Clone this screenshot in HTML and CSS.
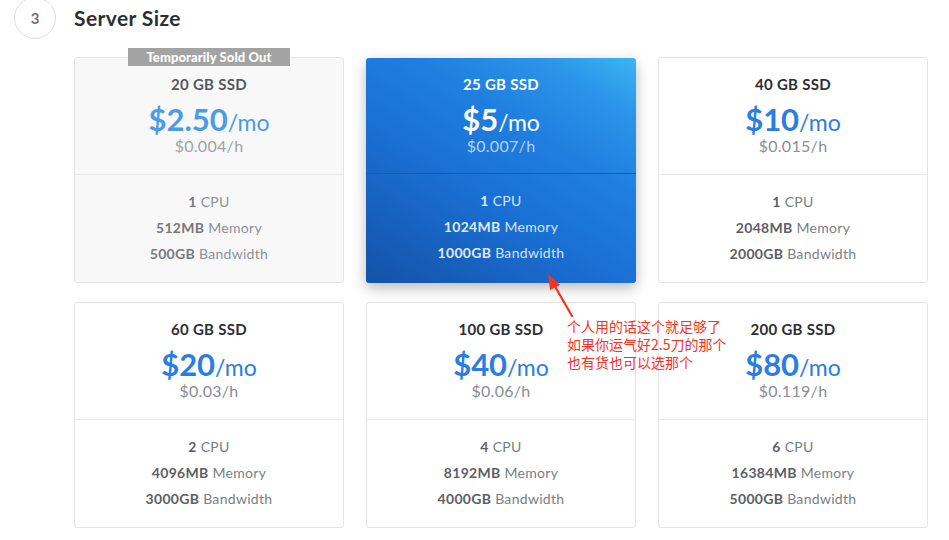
FILE: index.html
```html
<!DOCTYPE html>
<html lang="zh">
<head>
<meta charset="utf-8">
<title>Server Size</title>
<link rel="stylesheet" href="styles.css">
</head>
<body>
<div class="page">
  <header class="section-head">
    <span class="step">3</span>
    <h2 class="title">Server Size</h2>
  </header>

  <div class="grid">
    <div class="card soldout">
      <span class="badge">Temporarily Sold Out</span>
      <div class="top">
        <div class="size">20 GB SSD</div>
        <div class="price"><span class="amt">$2.50</span><span class="per">/mo</span></div>
        <div class="hour">$0.004/h</div>
      </div>
      <div class="specs">
        <div><b>1</b> CPU</div>
        <div><b>512MB</b> Memory</div>
        <div><b>500GB</b> Bandwidth</div>
      </div>
    </div>

    <div class="card selected">
      <div class="top">
        <div class="size">25 GB SSD</div>
        <div class="price"><span class="amt">$5</span><span class="per">/mo</span></div>
        <div class="hour">$0.007/h</div>
      </div>
      <div class="specs">
        <div><b>1</b> CPU</div>
        <div><b>1024MB</b> Memory</div>
        <div><b>1000GB</b> Bandwidth</div>
      </div>
    </div>

    <div class="card">
      <div class="top">
        <div class="size">40 GB SSD</div>
        <div class="price"><span class="amt">$10</span><span class="per">/mo</span></div>
        <div class="hour">$0.015/h</div>
      </div>
      <div class="specs">
        <div><b>1</b> CPU</div>
        <div><b>2048MB</b> Memory</div>
        <div><b>2000GB</b> Bandwidth</div>
      </div>
    </div>

    <div class="card">
      <div class="top">
        <div class="size">60 GB SSD</div>
        <div class="price"><span class="amt">$20</span><span class="per">/mo</span></div>
        <div class="hour">$0.03/h</div>
      </div>
      <div class="specs">
        <div><b>2</b> CPU</div>
        <div><b>4096MB</b> Memory</div>
        <div><b>3000GB</b> Bandwidth</div>
      </div>
    </div>

    <div class="card">
      <div class="top">
        <div class="size">100 GB SSD</div>
        <div class="price"><span class="amt">$40</span><span class="per">/mo</span></div>
        <div class="hour">$0.06/h</div>
      </div>
      <div class="specs">
        <div><b>4</b> CPU</div>
        <div><b>8192MB</b> Memory</div>
        <div><b>4000GB</b> Bandwidth</div>
      </div>
    </div>

    <div class="card">
      <div class="top">
        <div class="size">200 GB SSD</div>
        <div class="price"><span class="amt">$80</span><span class="per">/mo</span></div>
        <div class="hour">$0.119/h</div>
      </div>
      <div class="specs">
        <div><b>6</b> CPU</div>
        <div><b>16384MB</b> Memory</div>
        <div><b>5000GB</b> Bandwidth</div>
      </div>
    </div>
  </div>

  <svg class="arrow" width="40" height="50" viewBox="0 0 40 50">
    <line x1="33" y1="45" x2="14" y2="12" stroke="#f5331f" stroke-width="2.2" stroke-linecap="round"/>
    <polygon points="9,3 21,14 11,19" fill="#f5331f"/>
  </svg>
  <div class="note">个人用的话这个就足够了<br>如果你运气好2.5刀的那个<br>也有货也可以选那个</div>
</div>
</body>
</html>
```

FILE: styles.css
```css
html, body {
  margin: 0;
  padding: 0;
  background: #fff;
}

.page {
  position: relative;
  width: 949px;
  height: 540px;
  overflow: hidden;
  font-family: Lato, "Open Sans", "Liberation Sans", sans-serif;
  color: #333;
}

.section-head {
  display: flex;
  align-items: center;
  gap: 18px;
  padding-left: 14px;
  margin-top: -3px;
  height: 42px;
}

.step {
  box-sizing: border-box;
  width: 42px;
  height: 42px;
  border: 1px solid #dcdfe3;
  border-radius: 50%;
  display: flex;
  align-items: center;
  justify-content: center;
  font-size: 15px;
  font-weight: 700;
  color: #6e7580;
}

.title {
  margin: -1px 0 0;
  font-size: 21px;
  font-weight: 700;
  color: #2b2f33;
  letter-spacing: 0.4px;
}

.grid {
  display: grid;
  grid-template-columns: repeat(3, 270px);
  column-gap: 22px;
  row-gap: 19px;
  margin: 18px 0 0 74px;
}

.card {
  position: relative;
  box-sizing: border-box;
  height: 226px;
  border: 1px solid #e3e5e8;
  border-radius: 3px;
  background: #fff;
  text-align: center;
}

.top {
  box-sizing: border-box;
  height: 117px;
  padding-top: 16px;
  border-bottom: 1px solid #e6e8eb;
}

.size,
.price,
.hour {
  width: fit-content;
  margin-left: auto;
  margin-right: auto;
}

.size {
  font-size: 15px;
  font-weight: 700;
  line-height: 20px;
  color: #2b2f33;
  letter-spacing: 0.3px;
}

.price {
  margin-top: 13px;
  line-height: 24px;
  color: #2a7de1;
}

.amt {
  font-size: 31px;
  font-weight: 700;
}

.per {
  font-size: 23px;
  font-weight: 400;
}

.hour {
  font-size: 16px;
  line-height: 18px;
  color: #8a8e93;
  letter-spacing: 0.3px;
}

.specs {
  padding-top: 14px;
  font-size: 14px;
  line-height: 26px;
  color: #7a7e83;
  letter-spacing: 0.3px;
}

.specs b {
  font-weight: 700;
  color: #5c6065;
}

/* sold out card */
.soldout {
  background: #f8f8f8;
}

.soldout .size {
  color: #55595e;
}

.soldout .price {
  color: #4b9be8;
}

.soldout .hour {
  color: #a0a3a7;
}

.soldout .specs {
  color: #8d9095;
}

.soldout .specs b {
  color: #77797d;
}

.badge {
  position: absolute;
  top: -10px;
  left: 53px;
  width: 162px;
  height: 18px;
  line-height: 18px;
  background: #a3a3a3;
  color: #fff;
  font-size: 13px;
  font-weight: 900;
  letter-spacing: 0.1px;
}

/* selected card */
.selected {
  border: none;
  border-radius: 3px;
  background: linear-gradient(32deg, #1452a8 0%, #1a6fd3 40%, #1f7fe0 65%, #2b95e9 85%, #3cb5f4 100%);
  box-shadow: 0 5px 14px rgba(0, 0, 0, 0.28);
  margin-top: 1px;
  height: 225px;
}

.selected .top {
  border-bottom: 1px solid #1a5aa6;
  height: 116px;
}

.selected .size,
.selected .price {
  color: #fff;
}

.selected .hour {
  color: #b5d3f3;
}

.selected .specs {
  color: #d2e4f8;
}

.selected .specs b {
  color: #dfeafa;
}

/* annotation */
.arrow {
  position: absolute;
  left: 539px;
  top: 271px;
}

.note {
  position: absolute;
  left: 567px;
  top: 317px;
  font-family: "Noto Sans CJK SC", sans-serif;
  font-size: 14px;
  line-height: 18px;
  color: #f5331f;
}
```
